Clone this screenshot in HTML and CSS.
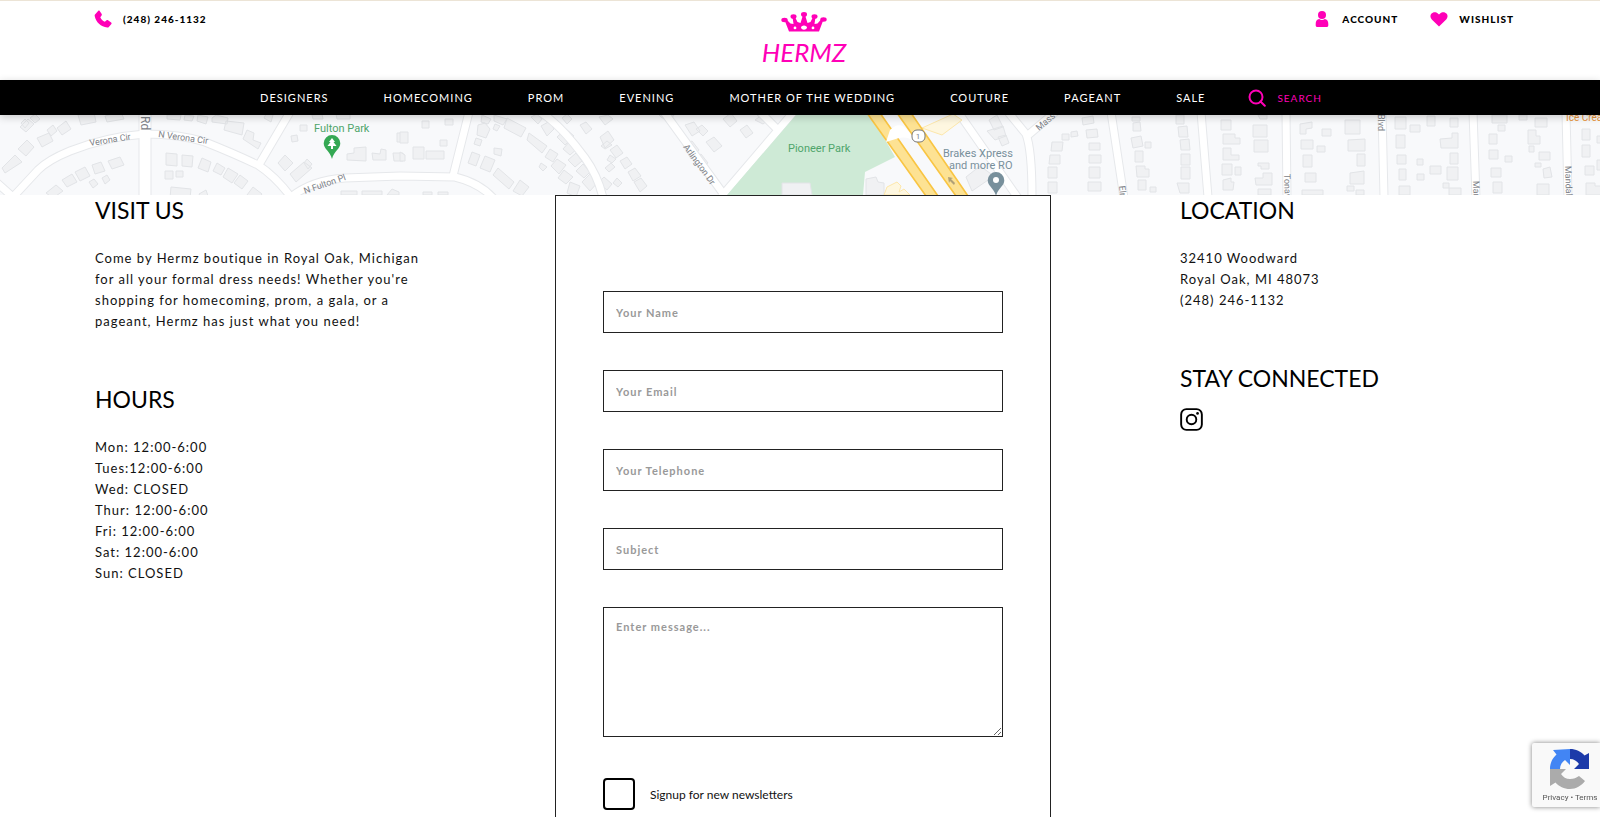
FILE: index.html
```html
<!DOCTYPE html>
<html lang="en">
<head>
<meta charset="utf-8">
<meta name="viewport" content="width=device-width, initial-scale=1">
<title>Contact | Hermz</title>
<link rel="stylesheet" href="styles.css">
</head>
<body>
<header class="header">
  <div class="top-left">
    <a class="top-link" href="#phone">
      <svg class="icon" viewBox="0 0 18 18" aria-hidden="true"><path d="M1 4.600 4.300.8c.5-.4 1-.3 1.400.2l2 3.100c.3.5.2 1-.1 1.400L6.300 7.200c.9 2.100 2.400 3.600 4.500 4.500l1.800-1.500c.4-.3.9-.4 1.400 0l3.200 2.300c.5.400.6.9.2 1.400l-2.600 3c-.4.4-.9.6-1.500.500C6.900 16.800 1.800 12 .7 5.900c-.1-.5 0-.9.300-1.300z"/></svg>
      <span>(248) 246-1132</span>
    </a>
  </div>
  <a class="logo" href="#home" aria-label="Hermz home">
    <svg class="crown" viewBox="0 0 46 20" aria-hidden="true">
      <path fill-rule="evenodd" d="M8 19.500 3.500 8 6 8l3.500 3.500 3 .500L11.500 5h2.500l2.500 5 3 1L22 3h2l2.500 8 3-1L32 5h2.500l-1 7 3-.500L40 7.500h2.500L38 19.500zM23 13.500c-1.600 0-3 1-3 2.100s1.400 2.100 3 2.100 3-1 3-2.100-1.400-2.100-3-2.100zM14 14.500a1.400 1.400 0 1 0 0 2.800 1.400 1.400 0 0 0 0-2.800zM32 14.500a1.400 1.400 0 1 0 0 2.800 1.400 1.400 0 0 0 0-2.800z"/>
      <ellipse cx="3.500" cy="8" rx="3.200" ry="2.200"/><ellipse cx="12.500" cy="4.500" rx="3" ry="2.300"/><ellipse cx="23" cy="2.500" rx="3" ry="2.400"/><ellipse cx="33.500" cy="4.500" rx="3" ry="2.300"/><ellipse cx="42.500" cy="7.500" rx="3.200" ry="2.200"/>
    </svg>
    <span class="logo-text">HERMZ</span>
  </a>
  <div class="top-right">
    <a class="top-link" href="#account">
      <svg class="icon" viewBox="0 0 18 18" aria-hidden="true"><circle cx="9" cy="5" r="4"/><path d="M2.700 14c0-2.800 1.200-4.600 3.500-5 1.700 1.300 3.900 1.300 5.600 0 2.300.4 3.500 2.200 3.500 5v1.200c0 1.200-.6 1.800-1.800 1.800h-9c-1.200 0-1.800-.6-1.800-1.800z"/></svg>
      <span>ACCOUNT</span>
    </a>
    <a class="top-link" href="#wishlist">
      <svg class="icon" viewBox="0 0 18 18" aria-hidden="true"><path d="M9 16.500 1.800 9.400C.2 7.800 0 5.400 1.300 3.800c1.600-2.100 4.700-2.200 6.600-.3L9 4.600l1.100-1.100c1.900-1.900 5-1.800 6.600.3 1.300 1.600 1.100 4-.5 5.600z"/></svg>
      <span>WISHLIST</span>
    </a>
  </div>
</header>

<nav class="nav" aria-label="Main">
  <a href="#designers">DESIGNERS</a>
  <a href="#homecoming">HOMECOMING</a>
  <a href="#prom">PROM</a>
  <a href="#evening">EVENING</a>
  <a href="#mother">MOTHER OF THE WEDDING</a>
  <a href="#couture">COUTURE</a>
  <a href="#pageant">PAGEANT</a>
  <a href="#sale">SALE</a>
  <button class="search" type="button">
    <svg viewBox="0 0 18 18" aria-hidden="true"><circle cx="8" cy="8" r="6.500"/><path d="m12.500 12.500 4.300 4.300"/></svg>
    <span>SEARCH</span>
  </button>
</nav>

<div class="map">
  <svg viewBox="0 115 1600 80" preserveAspectRatio="xMidYMid slice" role="img" aria-label="Map of the area around the store">
    <g class="building">
      <!-- tilted blocks -->
      <path d="M20 127l8-8 6 5-8 8zM30 118l5-4 5 5-5 4zM57 128l9-7 5 8-9 6zM37 138l12-5 4 8-11 6zM21 123l4-4 4 4-4 5zM47 130l6-5 4 6-6 5zM78 115l16-3 2 10-15 3zM105 116l16-4 3 7-17 3zM18 149l9-9 7 7-8 9zM2 168l13-13 7 7-17 11zM62 180l10-6 5 8-10 5zM75 172l10-5 5 9-10 5zM92 165l9-3 4 9-10 3zM108 161l12-4 4 8-12 4zM89 182l5-3 4 5-5 4zM102 178l5-3 3 5-5 4zM46 193l10-8 7 6-10 7z"/>
      <path d="M166 153l11 1v12l-11-1zM182 155l11 1-1 11-10-1zM202 158l9 4-3 10-10-4zM217 163l8 5-4 7-8-4zM228 168l10 6-6 9-9-6zM240 175l8 6-6 8-8-6zM165 171h8v8h-8zM176 171h7v6h-7zM171 187l20 2-1 9h-20zM199 194l7-4 2 6h-8zM253 187l9 7-5 6-10-5zM167 115h14l-1 5-13-1zM185 115l9 1-2 5-8-1zM198 115l10 2-2 7-9-3zM212 118l4-3 12 3-1 6-15-2zM226 121l18 2-2 12-18-5zM247 130l7 3-1 7 8 3-3 6-15-10zM264 118l3-6 6 3-2 7zM285 155l8 8-8 8-7-8zM290 174l14-12 8 6-16 14zM304 163l3-4 5 5-4 5zM300 125h7v6h-7zM291 136l6-1 1 6-6 1zM312 115l10-1 1 5h-10zM336 114l14-1v6h-13zM347 154l7-1v-5l12-1v14l-19-1zM372 153l8 1 1-5 5 1v10h-13zM393 153h10v8h-9zM397 133h10v9h-10zM341 195v-4h16v4zM362 195v-4h20v4zM387 195l5-6 7 3v3z"/>
      <path d="M422 121h7v7h-7zM445 119h8v6h-8zM440 140h7v6h-7zM413 147h11v12h-11zM426 151h18v8h-18zM400 132h8v11h-8zM400 152l5 3v6h-5zM482 115l9 4-3 5-7-2zM494 115l13 4-4 6-9-4zM478 125l7-2 5 6-4 9-9-3zM495 124l5 2-3 5-4-2zM507 118l19 10-5 9-17-9zM529 133l18 13-5 7-15-13zM476 138l6 2-2 6-6-2zM494 148l8 1-1 7-7-2zM472 152l8 3-4 11-8-3zM485 156l10 4-5 12-10-4zM498 168l16 14-5 7-16-14zM550 149l8 5-5 8-8-5zM541 163l6 4-4 4-4-4zM557 159l9 6-7 9-8-8zM564 170l9 7-7 7-8-6zM570 182l10 4-4 11-9-4zM520 180l9 7-7 9-9-5zM423 192h9v3h-9zM438 192h10v3h-10z"/>
      <path d="M531 117l6-3 5 5-4 5zM541 126l9-5 4 8-7 7zM557 137l9-8 8 7-9 9zM563 149l7-8 8 7-8 7zM568 160l8-7 6 8-7 6zM576 171l7-7 7 8-6 6zM582 182l8-8 8 8-8 9zM562 118l5-4 5 5-5 5zM580 125l6-3 6 7-6 5zM599 117l9-2 5 4-8 6zM600 137l8-6 6 9-9 8zM601 146l6-5 5 4-7 4zM610 150l7-5 6 8-7 5zM620 161l7-4 5 7-7 5zM628 172l7-4 6 8-8 5zM610 155l6 4-4 4-5-3zM598 183l6-6 8 7-5 6zM613 183l4-5 5 5-4 4zM605 168l6-5 4 4-6 5zM634 182l7-4 6 8-7 6zM659 115h15l-5 7-8-5zM685 125l9-3 6 9-8 5zM696 129l6-4 6 6-5 5zM683 145l9-4 7 9-8 9zM693 160l8-6 7 9-8 6zM706 142l8-5 8 9-8 6zM723 119l8-6 6 8-7 6zM740 130l7-5 6 8-7 5zM755 120l7-5 5 6-4 3z"/>
      <!-- blocks east of the highway -->
      <path d="M989 120l8-5 6 12-9 3zM987 131l16-5 3 10-11 4zM998 137l8-2 3 8-7 3zM1071 132l6-1 1 5-7 1zM1082 118l11-2 1 7-11 2zM1062 134h7v6h-7zM1052 142h11l-1 9h-11zM1086 130l11-1 1 8-11 1zM1050 155h10v9h-11zM1089 143h11v7h-11zM1048 167h9v11h-9zM1089 155h12v8h-12zM1089 167h11v11h-11zM1048 182h9v11h-9zM1088 182h13v9h-13zM1132 117h8v4h-8zM1133 123l7-1 1 9h-8zM1131 138l10-2 2 10-10 2zM1145 142h6v6h-6zM1135 151h8v11h-8zM1136 166h9v3h4v8h-12zM1138 180h8v10h-8zM1150 187h6v5h-6zM1176 115h8v9h-8zM1178 127l9-1 1 11h-9zM1180 140l9-1 1 11h-9zM1181 154h9v11h-9zM1181 167h9v12h-9zM1177 183h12v10h-9zM1221 120h10v10h-10zM1223 134h12v4h5v6h-17zM1223 148h8v7h8v5h-16zM1222 164h10v11h-10zM1235 167h6v8h-6zM1223 180l8-2v4h3l-1 8h-10zM1258 115h9v4h-7zM1253 125h14v12h-14zM1254 140h14v12h-14zM1258 163h11v6h-8v-3h-3zM1255 178h8v-5h9v12h-16zM1258 189h13v6h-13zM1300 124l12-2v6l-6 1v5h-6zM1322 129h9v7h-9zM1301 140h12v9h-12zM1317 146h8v6h-8zM1303 155h9v12h-9zM1305 173h11v9h-11zM1302 190h21v5h-21zM1345 120h15v14h-15zM1348 140l17-1v12h-17zM1357 154h8v12h-8zM1350 173l14-2v13h-14zM1347 186h7v5h-7zM1356 190h8v5h-8z"/>
      <path d="M1395 117h11v12h-11zM1410 125h10v7h-10zM1427 116h8v10h-8zM1450 118h8v9h-8zM1396 135h9v13h-9zM1440 139l12-1v-5h6v15h-17zM1397 155h9v9h-9zM1417 159h6v6h-6zM1450 153h8v11h-8zM1399 169h7v11h-7zM1430 166h11v8h-11zM1447 167h11v13h-11zM1417 174h7v6h-7zM1399 186h11v9h-11zM1443 183h6v5h-6zM1449 188h12v7h-12zM1492 115h15v8h-15zM1498 125h7v6h-7zM1519 115h8v5h-8zM1535 118h12v9h-12zM1528 130h8v6h4v8h-12zM1489 134h8v10h-8zM1529 146h5v6h-5zM1489 150h9v9h-9zM1505 156h7v6h-7zM1539 152h11v8h-11zM1535 163h6v4h-6zM1491 168h10v9h-10zM1543 169l7-2 2 10-8 1zM1493 182h9v11h-9zM1537 184h12v11h-12zM1582 129h8v11h-8zM1582 145h8v12h-8zM1585 166h9v9h-9zM1586 183h9v3h6v9h-15zM1597 136h4v7h-4zM1597 160h5v10h-5z"/>
    </g>
    <g class="road-edge">
      <path stroke-width="13" d="M145 115v80"/>
      <path stroke-width="9" d="M-4 182 13 197 38 170Q48 160 70 151 105 137 145 134 180 134 205 142 235 154 258 165 275 176 291 197M290 112 260 163M291 197Q312 180 345 178L400 176 455 177Q480 183 494 199M469 112 453 176M540 112Q560 124 585 158 598 176 603 198M664 112 722 192M797 108 721 197M760 112l17 17M958 112 1018 198M1008 112 1026 134Q1032 150 1032 197M1027 136 1060 108M1111 112 1124 198M1201 112 1208 197M1286 112 1287 197M1382 112 1384 197M1473 112 1476 197M1566 112 1568 197"/>
    </g>
    <g class="road">
      <path stroke-width="11" d="M145 115v80"/>
      <path stroke-width="7" d="M-4 182 13 197 38 170Q48 160 70 151 105 137 145 134 180 134 205 142 235 154 258 165 275 176 291 197M290 112 260 163M291 197Q312 180 345 178L400 176 455 177Q480 183 494 199M469 112 453 176M540 112Q560 124 585 158 598 176 603 198M664 112 722 192M797 108 721 197M760 112l17 17M958 112 1018 198M1008 112 1026 134Q1032 150 1032 197M1027 136 1060 108M1111 112 1124 198M1201 112 1208 197M1286 112 1287 197M1382 112 1384 197M1473 112 1476 197M1566 112 1568 197"/>
    </g>
    <path class="park" d="M796 115h75l24 42-30 15-2 23H727z"/>
    <path class="building" d="M782 183h28l2 12h-30zM866 179l10-2 2 5 6 1v12h-18zM966 177l14-11 14 10-22 15z"/>
    <path class="shop" d="M922 128l31-14 9 6-20 15zM884 195l3-8 10-5 4 4-2 6 5-3 6 6z"/>
    <path class="highway-edge" d="M866 113 925 196h14L881 113zM896 113 955 196h14L912 113z"/>
    <path class="highway" d="M868 113 927 196h10L879 113zM898 113 957 196h10L910 113z"/>
    <path class="ramp" d="M890 130Q900 120 908 131L917 142Q907 136 899 138L886 142z"/>
    <path class="arrow" d="m948 177 1 6 1-2 4 4 1-2-4-4 2-1z"/>
    <rect class="shield" x="912" y="130" width="13" height="12" rx="5"/>
    <g class="street">
      <text x="918" y="139" font-size="8" text-anchor="middle">1</text>
      <text transform="translate(90 146) rotate(-9)">Verona Cir</text>
      <text transform="translate(158 137) rotate(8)">N Verona Cir</text>
      <text class="major" transform="translate(141 116) rotate(90)">Rd</text>
      <text transform="translate(305 194) rotate(-19)">N Fulton Pl</text>
      <text transform="translate(683 147) rotate(54)">Arlington Dr</text>
      <text transform="translate(1039 131) rotate(-40)">Mass</text>
      <text transform="translate(1119 186) rotate(84)">Elm</text>
      <text transform="translate(1284 174) rotate(88)">Tonawanda</text>
      <text transform="translate(1378 114) rotate(90)">Blvd</text>
      <text transform="translate(1473 181) rotate(88)">Marais</text>
      <text transform="translate(1565 166) rotate(88)">Mandalay</text>
    </g>
    <g class="place">
      <text class="green" x="314" y="132">Fulton Park</text>
      <text class="green" x="788" y="152">Pioneer Park</text>
      <text class="slate" x="943" y="157">Brakes Xpress</text>
      <text class="slate" x="949" y="169">and more RO</text>
      <text class="orange" x="1566" y="121">Ice Cream</text>
    </g>
    <path fill="#34a853" d="M332 135a8.300 8.300 0 0 1 8.300 8.300c0 6-6.300 7.700-8.300 15.700-2-8-8.300-9.700-8.300-15.700A8.300 8.300 0 0 1 332 135z"/>
    <path fill="#fff" d="m332 138 3 4h-1.500l3 4H333v3h-2v-3h-3.500l3-4H329z"/>
    <path fill="#78909c" d="M996 172a8.300 8.300 0 0 1 8.300 8.300c0 6-6.300 7.700-8.300 15.700-2-8-8.300-9.700-8.300-15.700A8.300 8.300 0 0 1 996 172z"/>
    <circle cx="996" cy="180" r="3" fill="#fff"/>
  </svg>
</div>

<main class="content">
  <section class="column">
    <h2>VISIT US</h2>
    <p>Come by Hermz boutique in Royal Oak, Michigan for all your formal dress needs! Whether you're shopping for homecoming, prom, a gala, or a pageant, Hermz has just what you need!</p>
    <h2>HOURS</h2>
    <ul>
      <li>Mon: 12:00-6:00</li>
      <li>Tues:12:00-6:00</li>
      <li>Wed: CLOSED</li>
      <li>Thur: 12:00-6:00</li>
      <li>Fri: 12:00-6:00</li>
      <li>Sat: 12:00-6:00</li>
      <li>Sun: CLOSED</li>
    </ul>
  </section>

  <form class="contact">
    <input class="field" type="text" placeholder="Your Name" aria-label="Your Name">
    <input class="field" type="email" placeholder="Your Email" aria-label="Your Email">
    <input class="field" type="tel" placeholder="Your Telephone" aria-label="Your Telephone">
    <input class="field" type="text" placeholder="Subject" aria-label="Subject">
    <textarea class="field message" placeholder="Enter message..." aria-label="Enter message"></textarea>
    <div class="signup">
      <input type="checkbox" id="newsletter">
      <label for="newsletter">Signup for new newsletters</label>
    </div>
  </form>

  <section class="column column-right">
    <h2>LOCATION</h2>
    <address>32410 Woodward<br>Royal Oak, MI 48073<br>(248) 246-1132</address>
    <h2>STAY CONNECTED</h2>
    <a class="instagram" href="#instagram" aria-label="Instagram">
      <svg viewBox="0 0 24 24" aria-hidden="true"><rect x="1.200" y="1.200" width="21.600" height="21.600" rx="5.500"/><circle cx="12" cy="12" r="5"/><circle class="dot" cx="18.300" cy="5.700" r="1.400"/></svg>
    </a>
  </section>
</main>

<aside class="recaptcha" aria-label="reCAPTCHA">
  <svg viewBox="0 0 40 40" aria-hidden="true">
    <path fill="#1c3aa9" d="M20 0c6 0 11 2.600 14.500 6.500L39 4v16H24l5-5c-2-3-5-5-9-5z"/>
    <path fill="#4285f4" d="M20 0v16l-5-5c-3 2-5 5-5 9H0c0-6 2.500-11 6.500-14.500L3 1z"/>
    <path fill="#ababab" d="M0 20h16l-5 5c2 3 5 5 9 5 4 0 6-1 9-3l6 5c-3.500 4.500-9 8-15 8-6 0-11-2.500-14.500-6.500L0 37z"/>
  </svg>
  <div class="recaptcha-links"><a href="#privacy">Privacy</a> • <a href="#terms">Terms</a></div>
</aside>
</body>
</html>
```
FILE: styles.css
```css
* {
  box-sizing: border-box;
}

body {
  margin: 0;
  background: #fff;
  color: #111;
  font-family: Lato, "Open Sans", sans-serif;
  font-size: 13px;
  overflow-x: hidden;
}

a {
  color: inherit;
  text-decoration: none;
}

.header {
  display: grid;
  grid-template-columns: 1fr auto 1fr;
  align-items: start;
  height: 80px;
  padding: 0 86px 0 94px;
  border-top: 1px solid #ece4d6;
}

.top-left,
.top-right {
  display: flex;
  gap: 32px;
  padding-top: 9px;
}

.top-right {
  justify-content: flex-end;
}

.top-link {
  display: flex;
  align-items: center;
  gap: 11px;
  color: #000;
  font-size: 10px;
  font-weight: 900;
  line-height: 18px;
  letter-spacing: 1px;
}

.icon {
  width: 18px;
  height: 18px;
  fill: #ff00b7;
}

.logo {
  display: flex;
  flex-direction: column;
  align-items: center;
  padding-top: 11px;
  color: #ff00b7;
}

.crown {
  width: 46px;
  height: 20px;
  fill: #ff00b7;
}

.logo-text {
  font-size: 26px;
  font-style: italic;
  font-weight: 400;
  line-height: 40px;
}

.nav {
  position: relative;
  z-index: 1;
  display: flex;
  justify-content: center;
  align-items: center;
  gap: 55px;
  height: 35px;
  padding-right: 18px;
  background: #000;
  color: #fff;
  font-size: 11px;
  letter-spacing: 1px;
  box-shadow: 0 2px 8px rgba(0, 0, 0, 0.2);
}

.search {
  display: flex;
  align-items: center;
  gap: 11px;
  margin-left: -12px;
  padding: 0;
  border: 0;
  background: none;
  color: #ff00b7;
  font-family: inherit;
  font-size: 10px;
  letter-spacing: 1px;
}

.search svg {
  width: 18px;
  height: 18px;
  fill: none;
  stroke: #ff00b7;
  stroke-width: 2;
  stroke-linecap: round;
}

.map {
  height: 80px;
  background: #f8f9fb;
}

.map svg {
  display: block;
  width: 100%;
  height: 100%;
}

.building {
  fill: #f0f1f3;
  stroke: #e2e4e7;
}

.road-edge {
  fill: none;
  stroke: #e6e8eb;
}

.road {
  fill: none;
  stroke: #fff;
}

.park {
  fill: #ceead6;
}

.shop {
  fill: #fef7e0;
  stroke: #fde7ab;
}

.highway-edge {
  fill: #f9c543;
}

.highway {
  fill: #fde293;
}

.ramp {
  fill: #fff;
}

.arrow {
  fill: #b0a077;
}

.shield {
  fill: #fff;
  stroke: #777;
}

.street {
  fill: #7d8187;
  font-family: Roboto, sans-serif;
  font-size: 9px;
}

.street .major {
  font-size: 12px;
}

.place {
  font-family: Roboto, sans-serif;
  font-size: 11px;
}

.green {
  fill: #4fa56b;
}

.slate {
  fill: #78909c;
}

.orange {
  fill: #e8943a;
  font-size: 10px;
}

.content {
  display: grid;
  grid-template-columns: 460fr 496fr 549fr;
  padding-left: 95px;
}

.column {
  max-width: 330px;
  letter-spacing: 1px;
  line-height: 21px;
}

.column-right {
  max-width: none;
  padding-left: 129px;
}

h2 {
  margin: 0;
  color: #000;
  font-size: 23px;
  font-weight: 400;
  line-height: 30px;
  letter-spacing: 0;
}

.column p,
.column ul,
.column address {
  margin: 23px 0 52px;
  padding: 0;
  font-style: normal;
  list-style: none;
}

.contact {
  display: flex;
  flex-direction: column;
  gap: 37px;
  padding: 95px 47px 48px;
  border: 1px solid #222;
}

.field {
  display: block;
  width: 100%;
  height: 42px;
  padding: 0 12px;
  border: 1px solid #222;
  border-radius: 0;
  background: #fff;
  color: #111;
  font-family: inherit;
  font-size: 11px;
  font-weight: 700;
  letter-spacing: 1px;
}

.field::placeholder {
  color: #999;
  opacity: 1;
}

.message {
  height: 130px;
  padding: 12px;
  resize: vertical;
}

.signup {
  display: flex;
  align-items: center;
  gap: 15px;
  padding-top: 4px;
}

.signup input {
  appearance: none;
  width: 32px;
  height: 32px;
  margin: 0;
  border: 2px solid #000;
  border-radius: 4px;
  background: #fff;
}

.signup input:checked {
  background: #000;
}

.signup label {
  font-size: 12px;
}

.instagram svg {
  display: block;
  width: 23px;
  height: 23px;
  margin-top: 15px;
  fill: none;
  stroke: #000;
  stroke-width: 2;
}

.instagram .dot {
  fill: #000;
  stroke: none;
}

.recaptcha {
  position: fixed;
  right: 0;
  bottom: 10px;
  z-index: 2;
  display: flex;
  flex-direction: column;
  align-items: center;
  gap: 4px;
  width: 68px;
  height: 64px;
  padding: 6px 0 0 8px;
  border-radius: 2px 0 0 2px;
  background: #f9f9f9;
  box-shadow: 0 0 5px #808080;
}

.recaptcha svg {
  width: 40px;
  height: 40px;
}

.recaptcha-links {
  color: #555;
  font-family: Roboto, sans-serif;
  font-size: 8px;
  line-height: 10px;
  white-space: nowrap;
}
```
